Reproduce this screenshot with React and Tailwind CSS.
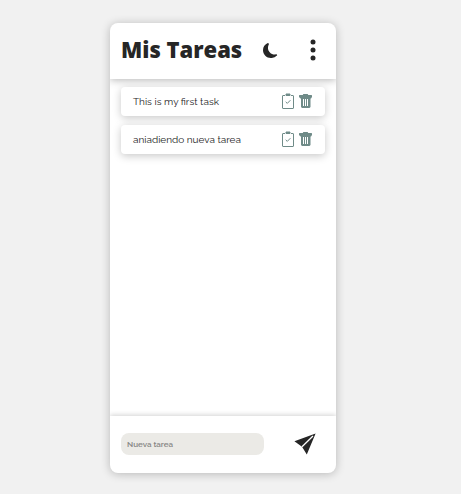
import { useState } from "react";

const initialTasks = ["This is my first task", "aniadiendo nueva tarea"];

function MoonIcon() {
  return (
    <svg viewBox="0 0 16 16" className="size-[15px]" fill="currentColor" aria-hidden="true">
      <path d="M6 .6A.8.8 0 0 1 6.2 1.500a7.200 7.200 0 0 0-.9 3.460c0 4.020 3.280 7.280 7.320 7.280q.79 0 1.530-.16a.8.8 0 0 1 .81.320.73.73 0 0 1-.03.900A8.350 8.350 0 0 1 8.340 16C3.730 16 0 12.290 0 7.710 0 4.270 2.110 1.310 5.120.060A.75.75 0 0 1 6 .6" />
    </svg>
  );
}

function DotsIcon() {
  return (
    <svg viewBox="0 0 6 22" className="h-[22px] w-[6px]" fill="currentColor" aria-hidden="true">
      <circle cx="3" cy="3" r="2.500" />
      <circle cx="3" cy="11" r="2.500" />
      <circle cx="3" cy="19" r="2.500" />
    </svg>
  );
}

function ClipboardIcon() {
  return (
    <svg viewBox="0 0 12 16" className="h-4 w-3" fill="none" stroke="currentColor" aria-hidden="true">
      <path d="M3 2.500H1a.5.5 0 0 0-.5.500v12a.5.5 0 0 0 .5.500h10a.5.5 0 0 0 .5-.5V3a.5.5 0 0 0-.5-.5H9" />
      <path d="M4 1h4v1.500H4z" fill="currentColor" />
      <path d="m3.700 8.800 1.600 1.600 3.100-3.200" />
    </svg>
  );
}

function TrashIcon() {
  return (
    <svg viewBox="0 0 13 14" className="h-[14px] w-[13px]" aria-hidden="true">
      <path
        fill="currentColor"
        d="M4.300 0h4.400l.5 1h3.300l.5.500V3l-1 1.500h-.5V13l-1 1H3l-1-1V4.500h-.5L0 3V1.500L.5 1h3.300z"
      />
      <path stroke="white" d="M4.500 5v7M6.500 5v7M8.500 5v7" />
    </svg>
  );
}

function SendIcon() {
  return (
    <svg viewBox="0 0 22 22" className="size-[22px]" aria-hidden="true">
      <path fill="currentColor" d="M21.600.400 12.800 21.600 8 13.700.4 8.300z" />
      <path stroke="white" strokeWidth="1.300" d="M19 3 8 13.700" />
    </svg>
  );
}

function Task({ text }) {
  return (
    <li className="flex h-[29px] items-center rounded bg-white pr-[13px] pl-3 shadow-[0_2px_8px_rgba(0,0,0,0.22)]">
      <span className="flex-1 text-[10px] leading-4 whitespace-nowrap text-[#262626]">{text}</span>
      <div className="flex items-center gap-[5px] pb-[2px] text-[#6f8b88]">
        <button type="button" aria-label="Completar tarea">
          <ClipboardIcon />
        </button>
        <button type="button" aria-label="Eliminar tarea">
          <TrashIcon />
        </button>
      </div>
    </li>
  );
}

export default function App() {
  const [tasks, setTasks] = useState(initialTasks);
  const [draft, setDraft] = useState("");

  function addTask(event) {
    event.preventDefault();
    if (!draft.trim()) return;
    setTasks([...tasks, draft.trim()]);
    setDraft("");
  }

  return (
    <div className="flex min-h-screen bg-[#f1f1f1] pt-[23px] pr-[125px] pb-[21px] pl-[110px] font-['Raleway','Lato',sans-serif] text-[#262626]">
      <main className="flex min-w-0 flex-1 flex-col overflow-hidden rounded-lg bg-white shadow-[0_1px_10px_rgba(0,0,0,0.24)]">
        <header className="flex h-14 items-center justify-between pr-5 pl-[11px] shadow-[0_1px_8px_rgba(0,0,0,0.3)]">
          <h1 className="pb-1 font-['Open_Sans',sans-serif] text-[22px] leading-8 font-extrabold whitespace-nowrap">
            Mis Tareas
          </h1>
          <div className="flex items-center gap-8 pb-[2px]">
            <button type="button" aria-label="Modo oscuro">
              <MoonIcon />
            </button>
            <button type="button" aria-label="Menú">
              <DotsIcon />
            </button>
          </div>
        </header>
        <ul className="flex flex-1 flex-col gap-[9px] px-[11px] pt-2">
          {tasks.map((task, index) => (
            <Task key={index} text={task} />
          ))}
        </ul>
        <form
          onSubmit={addTask}
          className="flex h-[57px] items-center justify-between gap-[30px] pr-5 pb-[2px] pl-[11px] shadow-[0_-1px_5px_rgba(0,0,0,0.18)]"
        >
          <input
            aria-label="Nueva tarea"
            placeholder="Nueva tarea"
            value={draft}
            onChange={(event) => setDraft(event.target.value)}
            className="h-[22px] min-w-0 flex-1 rounded-lg bg-[#ebeae6] px-[6px] text-[8px] font-semibold outline-none placeholder:text-[#858583]"
          />
          <button type="submit" aria-label="Agregar tarea">
            <SendIcon />
          </button>
        </form>
      </main>
    </div>
  );
}
